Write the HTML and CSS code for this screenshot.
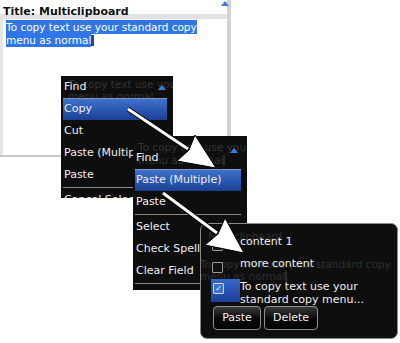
FILE: index.html
```html
<!DOCTYPE html>
<html lang="en">
<head>
    <meta charset="UTF-8">
    <title>Multiclipboard</title>
    <meta name="viewport" content="width=device-width, initial-scale=1.0">
    <link rel="stylesheet" href="styles.css">
</head>
<body>
    <div class="stage">
        <div class="screen">
            <div class="title-bar">
                <span class="title">Title: Multiclipboard</span>
                <span class="up up-screen"></span>
            </div>
            <div class="field">
                <span class="sel">To copy text use your standard copy</span><br><span class="sel">menu as normal</span><span class="caret"></span>
            </div>
        </div>

        <div class="menu menu-one">
            <div class="ghost ghost-one">To copy text use your<br>menu as normal</div>
            <span class="up up-one"></span>
            <div class="item">Find</div>
            <div class="item active">Copy</div>
            <div class="item">Cut</div>
            <div class="item">Paste (Multiple)</div>
            <div class="item">Paste</div>
            <div class="divider"></div>
            <div class="item">Cancel Selection</div>
        </div>

        <div class="menu menu-two">
            <div class="ghost ghost-two">To copy text use your<br>menu as normal<span class="caret dark"></span></div>
            <span class="up up-two"></span>
            <div class="item">Find</div>
            <div class="item active">Paste (Multiple)</div>
            <div class="item">Paste</div>
            <div class="divider"></div>
            <div class="item">Select</div>
            <div class="item">Check Spelling</div>
            <div class="item">Clear Field</div>
            <div class="divider"></div>
        </div>

        <div class="dialog">
            <div class="ghost ghost-three">
                <div class="ghost-title">Multiclipboard</div>
                <div>To copy text use your standard copy</div>
                <div>menu as normal<span class="caret dark"></span></div>
            </div>
            <div class="opt">
                <div class="mark"><span class="box"></span></div>
                <div class="label">content 1</div>
            </div>
            <div class="opt">
                <div class="mark"><span class="box"></span></div>
                <div class="label">more content</div>
            </div>
            <div class="opt picked">
                <div class="mark"><span class="box checked">&#10003;</span></div>
                <div class="label two-line">To copy text use your<br>standard copy menu...</div>
            </div>
            <div class="buttons">
                <span class="btn btn-paste">Paste</span>
                <span class="btn btn-delete">Delete</span>
            </div>
        </div>

        <svg class="arrows" width="400" height="343" viewBox="0 0 400 343">
            <g>
                <line x1="128" y1="109" x2="188" y2="149" stroke="#000" stroke-width="5"/>
                <line x1="128" y1="109" x2="188" y2="149" stroke="#fff" stroke-width="3"/>
                <polygon points="216,168 177,161 189,150 195,135" fill="#fff" stroke="#000" stroke-width="1"/>
            </g>
            <g>
                <line x1="163" y1="193" x2="217" y2="233" stroke="#000" stroke-width="5"/>
                <line x1="163" y1="193" x2="217" y2="233" stroke="#fff" stroke-width="3"/>
                <polygon points="244,253 205,245 218,234 225,218" fill="#fff" stroke="#000" stroke-width="1"/>
            </g>
        </svg>
    </div>
</body>
</html>
```

FILE: styles.css
```css
* {
    margin: 0;
    padding: 0;
    box-sizing: border-box;
}
body {
    background: #fff;
    font-family: "DejaVu Sans", "Liberation Sans", sans-serif;
}
.stage {
    position: relative;
    width: 400px;
    height: 343px;
    overflow: hidden;
}
.screen {
    position: absolute;
    left: 0;
    top: 0;
    width: 231px;
    height: 157px;
    background: #fff;
    border-right: 4px solid #d2d2d2;
    border-bottom: 2px solid #c8c8c8;
    display: flex;
    flex-direction: column;
}
.title-bar {
    height: 19px;
    padding: 0 0 0 3px;
    border-bottom: 5px solid #e2e2e2;
    position: relative;
}
.title {
    font-size: 11px;
    font-weight: bold;
    line-height: 13px;
    color: #111;
}
.field {
    flex: 1;
    border-left: 3px solid #e6e6e6;
    padding: 2px 0 0 3px;
    font-size: 10.5px;
    line-height: 12.5px;
}
.sel {
    background: #3176e6;
    color: #fff;
    padding: 1px 0;
}
.caret {
    display: inline-block;
    width: 3px;
    height: 11px;
    background: #1d4c9c;
    vertical-align: -2px;
}
.caret.dark {
    background: #2a2a2a;
    width: 2px;
}
.up {
    position: absolute;
    width: 0;
    height: 0;
    border-left: 4px solid transparent;
    border-right: 4px solid transparent;
    border-bottom: 5px solid #3a7be0;
    z-index: 2;
}
.up-screen {
    left: 221px;
    top: 1px;
}
.up-one {
    left: 97px;
    top: 9px;
}
.up-two {
    left: 97px;
    top: 12px;
}
.menu {
    position: absolute;
    background: #0e0e0e;
    color: #eee;
    font-size: 11px;
    overflow: hidden;
}
.menu-one {
    left: 61px;
    top: 76px;
    width: 112px;
    height: 122px;
}
.menu-two {
    left: 133px;
    top: 136px;
    width: 114px;
    height: 154px;
    padding-top: 11px;
}
.ghost {
    position: absolute;
    color: #333;
    font-size: 10.5px;
    line-height: 12px;
    white-space: nowrap;
}
.ghost-one {
    left: 7px;
    top: 2px;
}
.ghost-two {
    left: 5px;
    top: 5px;
    line-height: 13px;
}
.item {
    position: relative;
    height: 22px;
    line-height: 22px;
    margin: 0 6px 0 2px;
    padding-left: 1px;
    white-space: nowrap;
}
.item.active {
    background: linear-gradient(#3d72cc, #1b3f94);
    border-top: 1px solid #8397bf;
    line-height: 20px;
}
.divider {
    height: 1px;
    margin: 1px 6px 1px 2px;
    background: #8a8a8a;
}
.dialog {
    position: absolute;
    left: 200px;
    top: 223px;
    width: 198px;
    height: 116px;
    border: 1px solid #8a8a8a;
    border-radius: 7px;
    background: #0e0e0e;
    color: #eee;
    font-size: 11px;
    padding: 10px 0 0 10px;
    overflow: hidden;
}
.ghost-three {
    left: -1px;
    top: 6px;
    color: #2f2f2f;
}
.ghost-three div {
    height: 12px;
}
.ghost-title {
    margin-left: 8px;
    margin-bottom: 16px;
}
.opt {
    position: relative;
    display: flex;
    height: 22px;
}
.opt.picked {
    height: 23px;
    margin-top: 1px;
}
.mark {
    width: 29px;
    padding: 6px 0 0 1px;
}
.picked .mark {
    background: linear-gradient(#3467c8, #1c4096);
    padding-top: 4px;
    padding-left: 2px;
}
.box {
    display: block;
    width: 11px;
    height: 11px;
    border: 1px solid #9a9a9a;
    border-radius: 1px;
    background: #111;
}
.box.checked {
    border-color: #d8d8d8;
    background: #3b70d2;
    color: #fff;
    font-size: 8px;
    line-height: 9px;
    text-align: center;
}
.label {
    line-height: 16px;
    white-space: nowrap;
}
.two-line {
    line-height: 13px;
    padding-top: 1px;
}
.buttons {
    position: relative;
    display: flex;
    gap: 3px;
    margin: 4px 0 0 2px;
}
.btn {
    display: block;
    height: 24px;
    line-height: 22px;
    text-align: center;
    border: 1px solid #8e8e8e;
    border-radius: 4px;
    background: linear-gradient(#3a3a3a, #0a0a0a 50%, #000);
    color: #eee;
}
.btn-paste {
    width: 48px;
}
.btn-delete {
    width: 54px;
}
.arrows {
    position: absolute;
    left: 0;
    top: 0;
    pointer-events: none;
}
```
